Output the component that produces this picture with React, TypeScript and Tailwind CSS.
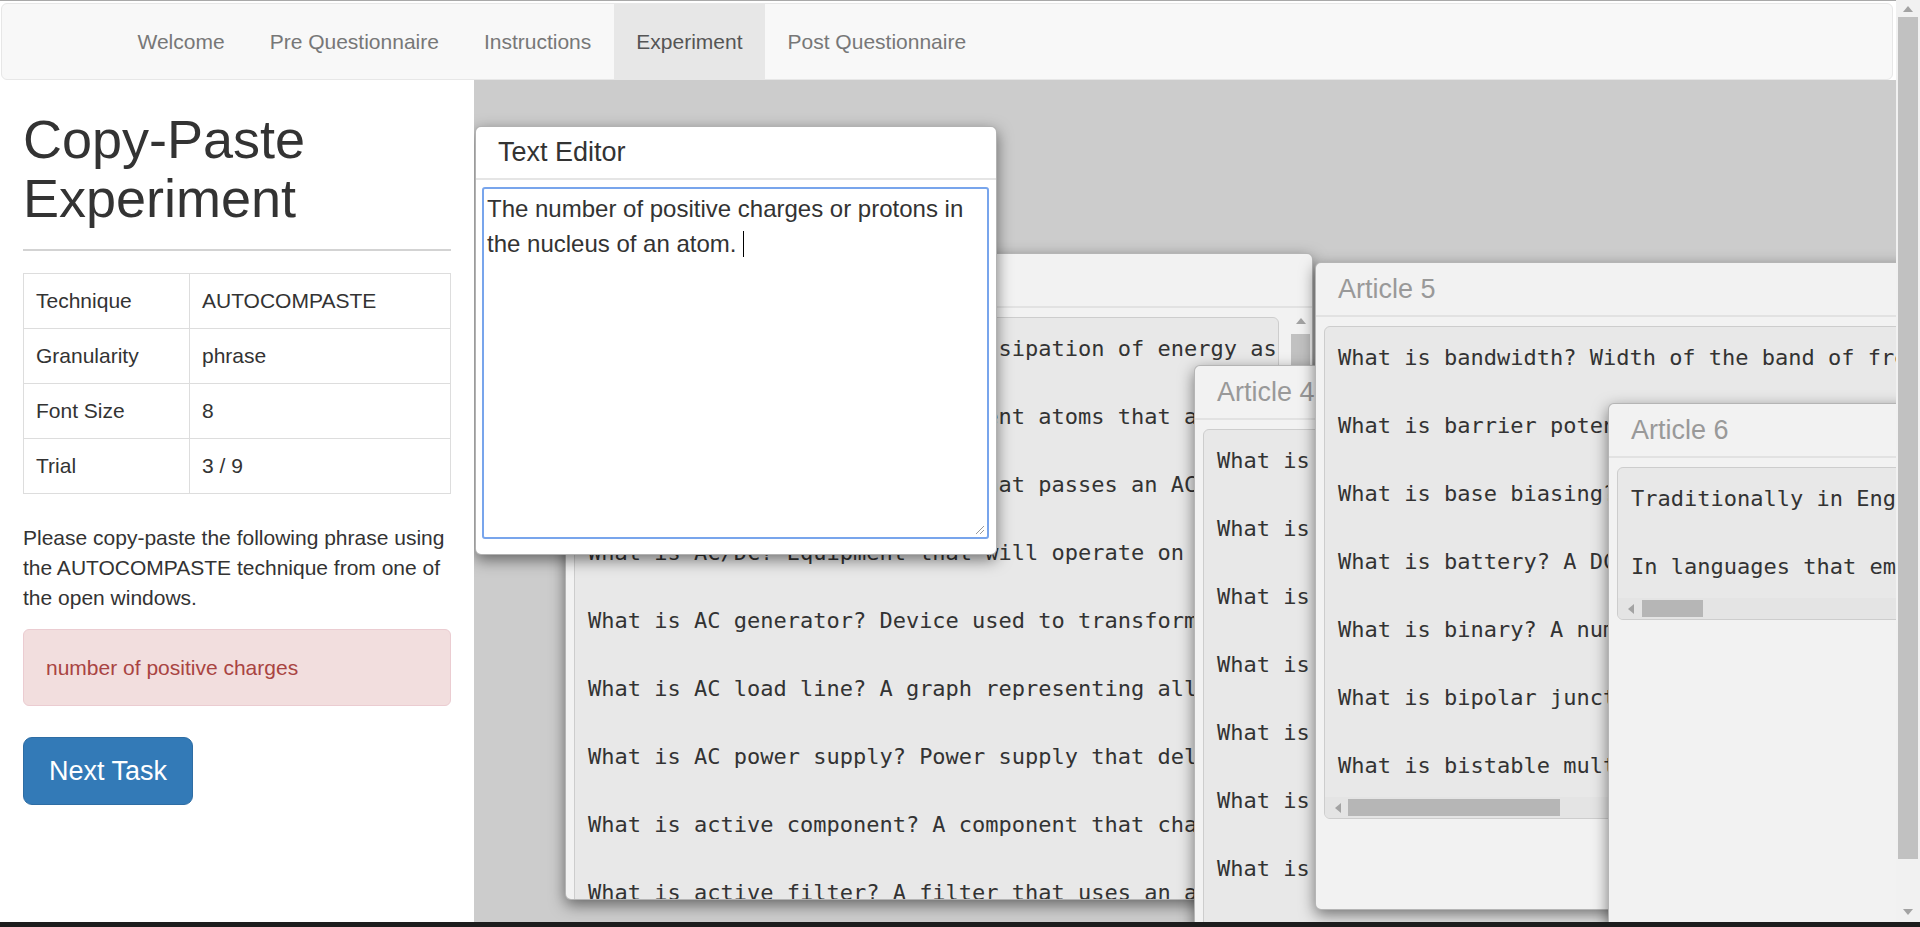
import clsx from "clsx";

const NAV_ITEMS = ["Welcome", "Pre Questionnaire", "Instructions", "Experiment", "Post Questionnaire"];
const ACTIVE_NAV = "Experiment";

const TRIAL_INFO: [string, string][] = [
  ["Technique", "AUTOCOMPASTE"],
  ["Granularity", "phrase"],
  ["Font Size", "8"],
  ["Trial", "3 / 9"],
];

const ARTICLE_3 = [
  "What is absorption? Thermal dissipation of energy as heat in a medium.",
  "What is acceptor atoms? Trivalent atoms that accept electrons.",
  "What is AC coupling? Network that passes an AC signal while blocking DC.",
  "What is AC/DC? Equipment that will operate on either AC or DC power.",
  "What is AC generator? Device used to transform mechanical energy into AC.",
  "What is AC load line? A graph representing all possible operating points.",
  "What is AC power supply? Power supply that delivers alternating current.",
  "What is active component? A component that changes the form of energy.",
  "What is active filter? A filter that uses an amplifier with passive parts.",
];

const ARTICLE_4 = [
  "What is admittance? The measure of how easily a circuit allows current.",
  "What is alternator? A generator that produces alternating current.",
  "What is ammeter? An instrument used to measure electric current.",
  "What is amplifier? A device that increases the strength of a signal.",
  "What is amplitude? The maximum value of a periodic waveform.",
  "What is analog? A signal that varies continuously over time.",
  "What is anode? The positive electrode of a device.",
  "What is antenna? A conductor that radiates or receives radio waves.",
];

const ARTICLE_5 = [
  "What is bandwidth? Width of the band of frequencies passed by a circuit.",
  "What is barrier potential? Voltage across the depletion layer of a diode.",
  "What is base biasing? A method of biasing a transistor through its base.",
  "What is battery? A DC voltage source made of one or more cells.",
  "What is binary? A number system that uses only the digits 0 and 1.",
  "What is bipolar junction transistor? A three layer semiconductor device.",
  "What is bistable multivibrator? A circuit with two stable states.",
];

const ARTICLE_6 = [
  "Traditionally in English, a phrase is a group of words.",
  "In languages that employ phrase structure, a phrase works as a unit.",
];

function Arrow({ dir }: { dir: "up" | "down" | "left" }) {
  if (dir === "left") {
    return (
      <svg width="6" height="10" viewBox="0 0 6 10">
        <path d="M6 0 L0 5 L6 10Z" fill="#a3a3a3" />
      </svg>
    );
  }
  return (
    <svg width="10" height="6" viewBox="0 0 10 6">
      <path d={dir === "up" ? "M0 6 L5 0 L10 6Z" : "M0 0 L10 0 L5 6Z"} fill="#a3a3a3" />
    </svg>
  );
}

interface ArticleWindowProps {
  title: string;
  lines: string[];
  className: string;
  vScroll?: boolean;
  hThumb?: { left: number; width: number };
}

const ArticleWindow = ({ title, lines, className, vScroll, hThumb }: ArticleWindowProps) => {
  return (
    <div
      className={clsx(
        "absolute flex flex-col overflow-hidden rounded-[6px] border border-black/25 bg-[#f2f2f2] shadow-[0_5px_15px_rgba(0,0,0,0.5)]",
        className
      )}
    >
      <div className="h-[54px] shrink-0 border-b-2 border-[#e2e2e2] pl-[22px] text-[27px] leading-[52px] text-[#999]">
        {title}
      </div>
      <div className="flex min-h-0 flex-1">
        <div className="min-w-0 flex-1 overflow-hidden pl-[8px] pr-[11px] pt-[9px]">
          <div className="overflow-hidden rounded-[6px] border border-[#cdcdcd] bg-[#e8e8e8] font-['DejaVu_Sans_Mono',monospace] text-[22px] leading-[34px] text-[#333]">
            <div className="overflow-hidden whitespace-pre px-[13px] py-[14px]">{lines.join("\n\n")}</div>
            {hThumb && (
              <div className="flex h-[21px] items-center bg-[#e4e4e4] pl-[10px]">
                <Arrow dir="left" />
                <div
                  className="h-[17px] bg-[#b6b6b6]"
                  style={{ marginLeft: hThumb.left, width: hThumb.width }}
                />
              </div>
            )}
          </div>
        </div>
        {vScroll && (
          <div className="mr-[1px] flex w-[21px] shrink-0 flex-col items-center pt-[10px]">
            <Arrow dir="up" />
            <div className="mt-[10px] h-[170px] w-[19px] bg-[#c1c1c1]" />
          </div>
        )}
      </div>
    </div>
  );
};

const TextEditor = () => {
  return (
    <div className="absolute left-[1px] top-[46px] z-50 h-[429px] w-[522px] rounded-[6px] border border-black/30 bg-white shadow-[0_5px_15px_rgba(0,0,0,0.5)]">
      <div className="h-[53px] border-b-2 border-[#e5e5e5] pl-[22px] text-[27px] leading-[51px] text-[#333]">
        Text Editor
      </div>
      <div className="pl-[6px] pt-[7px]">
        <div className="relative h-[352px] w-[507px] rounded-[3px] border-2 border-[#78a5ec] p-[3px] text-[24px] leading-[34.3px] text-[#333]">
          The number of positive charges or protons in the nucleus of an atom.{" "}
          <span className="inline-block h-[26px] w-px translate-y-[5px] bg-black" />
          <svg className="absolute bottom-[2px] right-[2px]" width="10" height="10" viewBox="0 0 10 10">
            <path d="M9 1 L1 9 M9 5 L5 9" stroke="#999" strokeWidth="1" />
          </svg>
        </div>
      </div>
    </div>
  );
};

const Sidebar = () => {
  return (
    <div className="w-[474px] shrink-0 bg-white px-[23px]">
      <h1 className="mt-[30px] text-[54px] font-normal leading-[1.1] text-[#333]">Copy-Paste Experiment</h1>
      <div className="mt-[20px] h-[2px] bg-[#d3d3d3]" />

      <table className="mt-[22px] w-full border-collapse text-[21px] leading-[30px] text-[#333]">
        <tbody>
          {TRIAL_INFO.map(([label, value]) => (
            <tr key={label}>
              <td className="w-[166px] border border-[#ddd] p-[12px]">{label}</td>
              <td className="border border-[#ddd] p-[12px]">{value}</td>
            </tr>
          ))}
        </tbody>
      </table>

      <p className="mt-[29px] text-[21px] leading-[30px] text-[#333]">
        Please copy-paste the following phrase using the AUTOCOMPASTE technique from one of the open windows.
      </p>

      <div className="mt-[16px] rounded-[6px] border border-[#ebccd1] bg-[#f2dede] px-[22px] pb-[22px] pt-[23px] text-[21px] leading-[30px] text-[#a94442]">
        number of positive charges
      </div>

      <button className="mt-[31px] rounded-[9px] border border-[#2e6da4] bg-[#337ab7] px-[25px] py-[15px] text-[27px] leading-[36px] text-white">
        Next Task
      </button>
    </div>
  );
};

export default function App() {
  return (
    <div className="flex h-[927px] w-[1920px] flex-col overflow-hidden bg-white font-['Liberation_Sans',Arial,sans-serif]">
      <div className="flex min-h-0 flex-1">
        <div className="flex min-w-0 flex-1 flex-col">
          <div className="h-px bg-[#a9a9a9]" />
          <nav className="ml-[1px] mr-[3px] mt-[2px] flex h-[77px] shrink-0 rounded-[6px] border border-[#e7e7e7] bg-[#f8f8f8] pl-[113px]">
            {NAV_ITEMS.map((item) => (
              <div
                key={item}
                className={clsx(
                  "flex items-center px-[22.5px] text-[21px] leading-[30px]",
                  item === ACTIVE_NAV ? "bg-[#e7e7e7] text-[#555]" : "text-[#777]"
                )}
              >
                {item}
              </div>
            ))}
          </nav>

          <div className="flex min-h-0 flex-1">
            <Sidebar />
            <div className="relative min-w-0 flex-1 overflow-hidden bg-[#cccccc]">
              <ArticleWindow title="Article 3" lines={ARTICLE_3} vScroll className="left-[91px] top-[173px] z-10 h-[647px] w-[748px]" />
              <ArticleWindow title="Article 4" lines={ARTICLE_4} className="left-[720px] top-[285px] z-20 h-[700px] w-[748px]" />
              <ArticleWindow
                title="Article 5"
                lines={ARTICLE_5}
                hThumb={{ left: 7, width: 212 }}
                className="left-[841px] top-[182px] z-30 h-[648px] w-[748px]"
              />
              <ArticleWindow
                title="Article 6"
                lines={ARTICLE_6}
                hThumb={{ left: 8, width: 61 }}
                className="left-[1134px] top-[323px] z-40 h-[650px] w-[748px]"
              />
              <TextEditor />
            </div>
          </div>
        </div>

        <div className="flex w-[24px] shrink-0 flex-col items-center bg-[#f1f1f1]">
          <div className="flex h-[17px] items-center">
            <Arrow dir="up" />
          </div>
          <div className="h-[842px] w-[20px] bg-[#c1c1c1]" />
          <div className="flex-1" />
          <div className="flex h-[20px] items-center">
            <Arrow dir="down" />
          </div>
        </div>
      </div>
      <div className="h-[5px] shrink-0 bg-[#1d1d1d]" />
    </div>
  );
}
